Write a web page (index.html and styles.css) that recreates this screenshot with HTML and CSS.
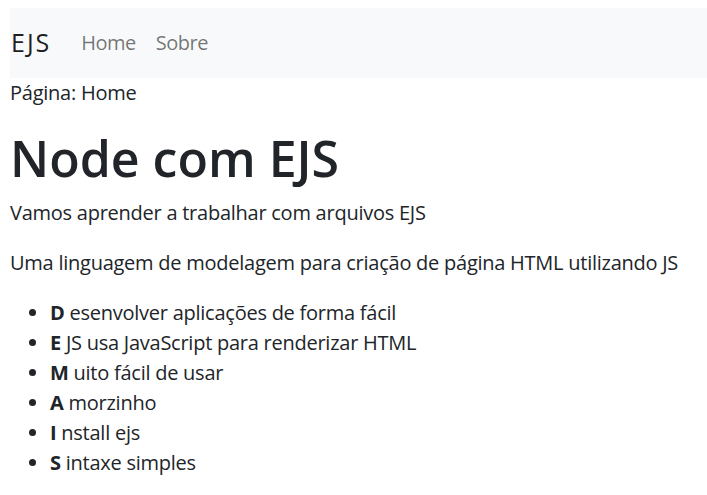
FILE: index.html
```html
<!DOCTYPE html>
<html lang="pt-BR">
<head>
<meta charset="utf-8">
<title>EJS</title>
<link rel="stylesheet" href="styles.css">
</head>
<body>
<nav class="navbar">
  <a class="brand" href="#">EJS</a>
  <ul class="nav">
    <li><a class="nav-link" href="#">Home</a></li>
    <li><a class="nav-link" href="#">Sobre</a></li>
  </ul>
</nav>
<div class="page">Página: Home</div>
<h1 class="title">Node com EJS</h1>
<p class="text">Vamos aprender a trabalhar com arquivos EJS</p>
<p class="text">Uma linguagem de modelagem para criação de página HTML utilizando JS</p>
<ul class="list">
  <li><b>D</b> esenvolver aplicações de forma fácil</li>
  <li><b>E</b> JS usa JavaScript para renderizar HTML</li>
  <li><b>M</b> uito fácil de usar</li>
  <li><b>A</b> morzinho</li>
  <li><b>I</b> nstall ejs</li>
  <li><b>S</b> intaxe simples</li>
</ul>
</body>
</html>
```
FILE: styles.css
```css
html { font-size: 20px; }
body {
  margin: 8px 0 0 10px;
  font-family: "Open Sans", "Noto Sans", sans-serif;
  font-size: 1rem;
  line-height: 1.5;
  letter-spacing: -0.25px;
  color: #212529;
  background: #fff;
}
.navbar {
  display: flex;
  align-items: center;
  background: #f8f9fa;
  padding: 10px 0;
}
.brand {
  font-size: 1.25rem;
  line-height: 1.5;
  letter-spacing: 2px;
  padding: 0.3125rem 0 0.3125rem 1px;
  margin-right: 20px;
  color: rgba(0, 0, 0, 0.9);
  text-decoration: none;
}
.nav {
  display: flex;
  list-style: none;
  margin: 0;
  padding: 0;
}
.nav-link {
  display: block;
  padding: 0.5rem;
  letter-spacing: -0.5px;
  color: rgba(0, 0, 0, 0.55);
  text-decoration: none;
}
.page { margin: 0 0 1rem 0; }
.title {
  font-size: 2.5rem;
  font-weight: 600;
  line-height: 1.2;
  letter-spacing: 0;
  margin: 0 0 0.5rem 0;
}
.text { margin: 0 0 1rem 0; }
.list {
  margin: 0 0 1rem 0;
  padding-left: 2rem;
}
.list b { font-weight: 700; }
```
